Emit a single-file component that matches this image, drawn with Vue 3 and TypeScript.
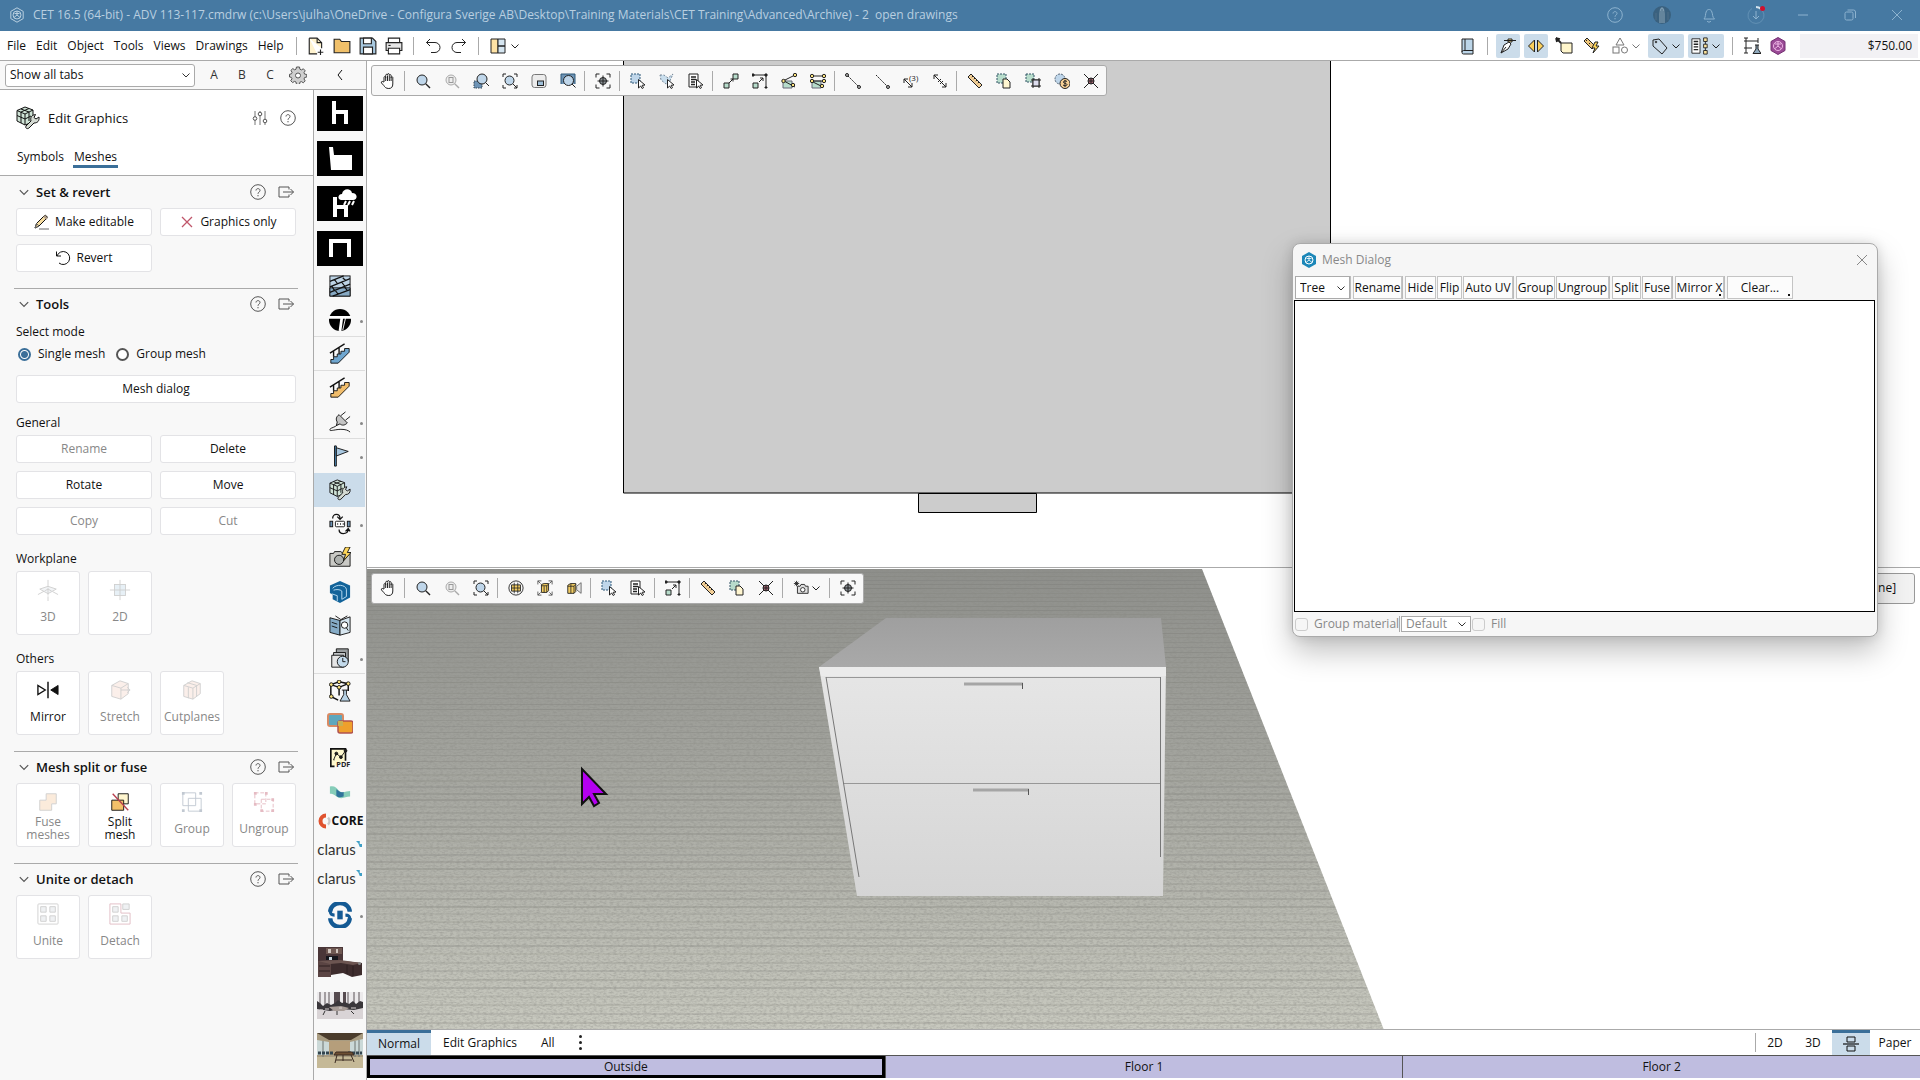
<script setup lang="ts">
import { h, ref } from 'vue'

interface IconProps { name: string; size?: number }
interface Stripe { y: number; o: number; w: number }

const magnifier = (fill: string, stroke = '#222') =>
  `<circle cx="7" cy="7" r="5" fill="${fill}" stroke="${stroke}"/><path d="M10.700 10.700 15 15" stroke="${stroke}" stroke-width="1.400"/>`
const pointer = '<path d="M8.500 6.500v8.500l2.200-2 1.500 2.500 1.300-.8-1.400-2.400 2.900-.3z" fill="#fff"/>'
const corners = '<path d="M1 4V1h3M12 1h3v3M15 12v3h-3M4 15H1v-3"/>'
const page = '<path d="M7 6h4l3 3v6H7z" fill="#fff6d0"/>'
const wrenchCube =
  '<path d="M9 1l8 3v8l-3 5-5 2-8-4V4.500z" fill="#cfe3d6"/><path d="M1 4.500 9 8l8-4M9 8v11M5 3l8 3v9M13 2.500 5 6v11M1 9.500 9 13l6-3"/><path d="M10 20l5-5c-1-4 1-6 4.500-6.500L18 11.500l2 1.500 3-2c.5 4-1.500 6-5 6l-5 5c-2 1.500-4 0-3-2z" fill="#d4dad2"/>'
const stairs = (fill: string) =>
  `<path d="M2 18h3v-3h4v-3h4V9h4V6h5v4L10 22H2z" fill="${fill}"/><path d="M1 11 17 1M5 9v6M11 5v7" stroke-width="1.500"/>`
const boxFace = '<path d="M3 7l9-5 9 3v11l-8 6-10-3z" fill="#f7d9cd"/><path d="M3 7l10 3 8-5M13 10v12" />'

const icons: Record<string, [number, string]> = {
  logo: [16, '<path d="M8 .800l6.200 3.600v7.200L8 15.200l-6.200-3.600V4.400z"/><circle cx="8" cy="8" r="4"/><path d="M8 4v4l-3 2.500M8 8l3 2.500M5.500 6.500h5"/>'],
  logoBlue: [16, '<path d="M8 0l7 4v8l-7 4-7-4V4z" fill="#1c87b8" stroke="none"/><circle cx="8" cy="8" r="4" stroke="#fff"/><path d="M8 4v4l-3 2.500M8 8l3 2.500M5.500 6.500h5" stroke="#fff" stroke-width=".8"/>'],
  help: [16, '<circle cx="8" cy="8" r="7.300"/><path d="M6 6.500C6 4 10 4 10 6.500 10 8 8 8 8 9.800M8 11v1.300"/>'],
  avatar: [20, '<circle cx="10" cy="10" r="9" fill="#3a617f" stroke="none"/><path d="M7 18V9l1-5 2-2 2 2 1 5v9z" fill="#7d9bb0" stroke="none"/><path d="M8 6v12M10 4v14M12 6v12M4 8v7M16 7v8" stroke="#4d6f88"/>'],
  bell: [16, '<path d="M3 12c2-2 1-5 2.500-8 1-2 4-2 5 0C12 7 11 10 13.500 12zM6 14c1 1.500 3 1.500 4 0"/>'],
  download: [18, '<path d="M5 2.500a8 8 0 1 0 8 0" opacity=".4"/><path d="M9 1a8 8 0 0 1 5 2" stroke="#d5e4ef" stroke-width="2"/><path d="M9 5v8M6 10l3 3 3-3"/><circle cx="15.500" cy="2.500" r="2.500" fill="#d0102e" stroke="none"/>'],
  min: [16, '<path d="M3 8h10"/>'],
  restore: [16, '<rect x="3" y="5" width="8" height="8" rx="1.500"/><path d="M5.500 3h6a2 2 0 0 1 2 2v6"/>'],
  close: [16, '<path d="M3 3l10 10M13 3 3 13"/>'],
  chev: [10, '<path d="M1.500 3.500 5 7l3.500-3.500"/>'],
  chevLeft: [16, '<path d="M10 3 6 8l4 5"/>'],
  newFile: [16, '<path d="M2 1h7l4 4v5M9 15H2V1" fill="#fff3cf"/><path d="M9 1v4h4M12 11v5M9.500 13.500h5"/>'],
  open: [16, '<path d="M1 2h5l1.500 2H15v10H1z" fill="#f0c06a"/>'],
  save: [16, '<path d="M1 1h11l3 3v11H1z" fill="#a8c9e0"/><path d="M4 1h7v5H4z" fill="#fff"/><path d="M4 9h8v6H4z" fill="#fff"/>'],
  print: [16, '<path d="M3 5V1h10v4" fill="#fff"/><path d="M1 5h14v7H1z" fill="#e6e6e6"/><path d="M3 10h10v5H3z" fill="#fff"/><path d="M3 7.500h2"/>'],
  undo: [16, '<path d="M5 1 1.500 4.500 5 8M1.500 4.500H10a5 5 0 0 1 0 10H6"/>'],
  redo: [16, '<path d="M11 1l3.500 3.500L11 8M14.500 4.500H6a5 5 0 0 0 0 10h4"/>'],
  layout: [16, '<path d="M1 1h7v14H1z" fill="#ffe3a5"/><path d="M8 1h7v7H8zM8 8h7v7H8z" fill="#d5e5f0"/>'],
  gear: [18, '<path d="M7.500 1h3l.4 2.200 1.500.7 2-1.100 1.800 2-1.200 1.800.6 1.500 2.200.4v2.500l-2.200.5-.6 1.500 1.200 1.900-1.900 1.900-1.900-1.200-1.500.6-.4 2.200h-3L7 16l-1.500-.6-1.900 1.200-1.900-1.900L3 12.800l-.7-1.500L.5 11V8.300l2-.5.600-1.500-1.200-1.900 1.900-1.800 1.800 1.200L7 3.200z" fill="#cfcfcf" stroke="#555"/><circle cx="9" cy="9.500" r="2.500" fill="#fff" stroke="#555"/>'],
  bookBlue: [18, '<path d="M3 2h11v15H4.500A1.500 1.500 0 0 1 3 15.500z" fill="#bcd5e8"/><path d="M3 15c0-1 .5-1.500 1.500-1.500H14M6 2v11"/>'],
  snap: [18, '<path d="M5 3.500h12M9 2h4v3H9z" fill="#ffe08a"/><path d="M2 16l3-8 5-3 2 2-3 5-7 4zM2 16l5-6" fill="#fff"/>'],
  flipH: [18, '<path d="M7.500 3v12L1.500 9zM10.500 3v12l6-6z" fill="#fbd05c"/>'],
  note: [18, '<path d="M6 6h11v10H8l-2-2z" fill="#fff6cc"/><path d="M1 1l5 5M1 1l1 4M1 1l4 1" stroke-width="1.800"/>'],
  measureBolt: [18, '<path d="M1 4l3-3 8 8-3 3z" fill="#efc77b"/><path d="M12 5l-3 6h3l-2 5 6-7h-3l2-4z" fill="#ffd65a"/><path d="M3 4l1-1M6 7l1-1"/>'],
  shapes: [18, '<path d="M9 1l4 7H5z"/><rect x="2" y="10" width="6" height="6"/><circle cx="13.500" cy="13" r="3"/>'],
  tag: [18, '<path d="M2 3l6-1 8 9-5 6-9-8z"/><circle cx="5" cy="5" r=".8"/>'],
  list: [20, '<path d="M1 2h9v16H1z" fill="#fff"/><path d="M3 5h5M3 8h5M3 11h5M3 14h5" stroke-width="1.500"/><path d="M14 1h4v4h-4zM14 8h4v4h-4zM14 15h4v4h-4z" fill="#fbe29b"/><path d="M16 5v3M16 12v3"/>'],
  flaskFilm: [18, '<path d="M3 1v15M1 4h14M1 11h8M15 1v5M1 16h4M1 1h4"/><path d="M12 8h4M13 8v4l-3 4.500h8L15 12V8" fill="#8fa9bd"/>'],
  hexPurple: [18, '<path d="M9 .500l7 4v9l-7 4-7-4v-9z" fill="#9a4a96" stroke="#743072"/><circle cx="9" cy="9" r="4.500" stroke="#efb6e6"/><path d="M9 5v4l-3 2.500M9 9l3 2.500M6 7h6" stroke="#efb6e6"/>'],
  hand: [16, '<path d="M4 9V4.500c0-1.300 1.700-1.300 1.700 0V2.300c0-1.300 1.800-1.300 1.800 0V1.500c0-1.200 1.800-1.200 1.800 0v1c0-1.200 1.800-1.200 1.800 0v2c0-1 1.700-1 1.700 0V11c0 3-1.500 4.500-4 4.500-3 0-4-1.500-5-3L1.500 10c-.6-1.400.8-2 1.500-1.200zM5.700 4v4M7.500 3v5M9.300 3v5M11.100 4v4" fill="#fff"/>'],
  zoom: [16, magnifier('#bfd6ea')],
  zoomPage: [16, magnifier('#eee', '#aaa') + '<rect x="5" y="4.500" width="4" height="5" stroke="#999"/>'],
  zoomArea: [16, '<rect x="1" y="8" width="8" height="7" fill="#6d93b5" stroke="#345" stroke-dasharray="1.500 1"/><circle cx="9" cy="6" r="5" fill="#bfd6ea"/><path d="M12.500 9.500 16 13"/>'],
  zoomFit: [16, corners + '<circle cx="7.500" cy="7.500" r="4.500" fill="#bfd6ea"/><path d="M11 11l4 4"/>'],
  minimap: [16, '<rect x="1" y="1.500" width="14" height="13" rx="2.500" fill="#ececec" stroke="#777"/><rect x="6.500" y="8" width="6" height="4.500" fill="#9fbfd8"/>'],
  zoomWin: [16, '<path d="M1 11V1h14v10" stroke="#2f5878" fill="#6d93b5"/><circle cx="8.500" cy="7.500" r="5" fill="#bfd6ea"/><path d="M12 11l3.500 3.500"/>'],
  target: [16, '<path d="M1 4.500V1h3.500M11.500 1H15v3.500M15 11.500V15h-3.500M4.500 15H1v-3.500"/><circle cx="8" cy="8" r="3.500" fill="#8b9297"/><path d="M8 2.500v11M2.500 8h11"/>'],
  selRect: [16, '<rect x="1" y="1" width="9" height="9" fill="#bfd6ea" stroke="#2f5878" stroke-dasharray="2 1"/>' + pointer],
  selPoly: [16, '<path d="M1 2h4l4 3 5-4-4 9-3 1-5-4z" fill="#c9deed" stroke="#789" stroke-dasharray="2 1.500"/>' + pointer],
  selList: [16, '<path d="M1 1h9v13H1z" fill="#fff"/><path d="M3 4h5M3 6.500h5M3 9h4M3 11.500h4" stroke-width="1.400"/>' + pointer],
  linkBox: [16, '<path d="M1 10h5v5H1zM10 1h5v5h-5z" fill="#b7dccb"/><path d="M6 10l4-4M7.500 6H10v2.500"/>'],
  stretchBox: [16, '<path d="M1 10h5v5H1z" fill="#b7dccb"/><path d="M1 2h13v13M7 9l4-4M8 5h3v3"/><path d="M0 1h2v2H0zM13 1h2v2h-2zM13 14h2v1h-2z" fill="#222"/>'],
  poly: [16, '<path d="M2 8h9v7H2z" fill="#b7dccb" stroke="#667"/><path d="M2 8l12-6M3 8l11 6"/><circle cx="2.500" cy="8" r="1.700" fill="#fbe27c"/><circle cx="14" cy="2" r="1.700" fill="#fbe27c"/><circle cx="12" cy="12" r="1.700" fill="#fbe27c"/>'],
  polyPair: [16, '<path d="M2 8h9v7H2z" fill="#b7dccb" stroke="#667"/><path d="M2 3h12M2 8h12M3 9l10 5"/><circle cx="2" cy="3" r="1.700" fill="#fbe27c"/><circle cx="14" cy="3" r="1.700" fill="#fbe27c"/><circle cx="2" cy="8" r="1.700" fill="#fbe27c"/><circle cx="14" cy="8" r="1.700" fill="#fbe27c"/><circle cx="12" cy="13" r="1.700" fill="#fbe27c"/>'],
  dots: [16, '<path d="M3 3l10 10" stroke-dasharray="2 1"/><circle cx="2" cy="2" r="1.500" fill="#bbb"/><circle cx="14" cy="14" r="1.500" fill="#bbb"/>'],
  dots2: [16, '<path d="M2 2l11 11" stroke-dasharray="2 1"/><circle cx="14" cy="14" r="1.500" fill="#bbb"/>'],
  dim3: [16, '<path d="M1 6l8 8M1 10V6h4M9 10v4H5"/><text x="6" y="8" font-size="8" fill="#222" stroke="none" font-family="Open Sans, sans-serif">(3)</text>'],
  dim: [16, '<path d="M2 2l12 12M2 6V2h4M14 10v4h-4M6 9l3-3M8 11l3-3"/>'],
  ruler: [16, '<path d="M1 4l3-3 11 11-3 3z" fill="#f3cf96"/><path d="M6 3 4.800 4.200M8 5 6.800 6.200M10 7 8.800 8.200M12 9l-1.200 1.200"/>'],
  copySel: [16, '<rect x="1" y="1" width="9" height="9" fill="#b7dccb" stroke="#356" stroke-dasharray="2 1"/>' + page],
  filmSel: [16, '<rect x="1" y="1" width="8" height="8" fill="#b7dccb" stroke="#356" stroke-dasharray="2 1"/><path d="M8 5v10M14 5v10M6 7h10M6 13h10"/><rect x="8" y="7" width="6" height="6" fill="#dde"/>'],
  price: [16, '<circle cx="6" cy="6" r="5" fill="#bfd6ea" stroke="#567" stroke-dasharray="2 1"/><circle cx="11" cy="10.500" r="5" fill="#f6cf95"/><path d="M13 8.500c-1-1-4-.8-3.500 1 .5 1 3 .7 3.500 2 0 1.500-3 1.500-4 .5M11 7v7"/>'],
  cross: [16, '<path d="M1 1l14 14M15 1 1 15"/><circle cx="8" cy="8" r="3" fill="#a46472"/><path d="M5 8h6M8 5v6"/>'],
  orbit: [18, '<circle cx="9" cy="9" r="8"/><path d="M4 5.500h10v7H4z" fill="#f3cd62"/><path d="M4 9h10M7 3v12M11 3v12" stroke-width=".9"/>'],
  boxFit: [18, '<path d="M5 5l3-1h5v8l-2 2H5z" fill="#f3cd62"/><path d="M5 6.500h6l2-2M11 6v8M8 7v7" stroke-width=".9"/><path d="M1 5V1h4M1 1l3 3M13 1h4v4M17 1l-3 3M17 13v4h-4M17 17l-3-3M5 17H1v-4M1 17l3-3" stroke="#555"/>'],
  boxCam: [18, '<path d="M2 6l3-2h6v9l-2 2H2z" fill="#f3cd62"/><path d="M2 7h7l2-2M9 7v8M5.500 4v11" stroke-width=".9"/><path d="M12 7l5-4v12l-5-4z" fill="#e4e4e4" stroke="#666"/>'],
  camera: [18, '<path d="M5 7h3l1-2h4l1 2h3v8H5z" fill="#ddd"/><circle cx="11" cy="11" r="2.500" fill="#fff"/><path d="M4 1v6M1 4h6M2 2l4 4M6 2 2 6"/>'],
  splitView: [16, '<path d="M4 1h8v5H4zM4 10h8v5H4z"/><path d="M0 8h16" stroke-width="1.200"/>'],
  sliders: [16, '<path d="M3 1v14M8 1v14M13 1v14" stroke="#777"/><circle cx="3" cy="8.500" r="1.800" fill="#fff"/><circle cx="8" cy="4" r="1.800" fill="#fff"/><circle cx="13" cy="11" r="1.800" fill="#fff"/>'],
  exportIcon: [16, '<path d="M11 5.500V3H1v10h10v-2.500M5 8h10.500M12.500 5l3 3-3 3"/>'],
  pencil: [16, '<path d="M1 14l1.500-4.500 8-8c1-1 3.500 1.500 2.500 2.500l-8 8z" fill="#f6dca0"/><path d="M10 2l3 3" stroke="#a98" stroke-width="2"/><path d="M1 14l1.500-4.500L5 12zM5 15h10" stroke="#666"/>'],
  redX: [16, '<path d="M3 3l10 10M13 3 3 13" stroke="#c0566a" stroke-width="1.300"/>'],
  revert: [16, '<path d="M1.500 1.500V6H6M2 6a6.500 6.500 0 1 1 2 7"/>'],
  wrenchCube: [24, wrenchCube],
  wp3d: [24, '<path d="M12 8l9 3-9 5-9-5z" fill="#dfe5ea"/><path d="M12 1v23M1 17l11-6 11 6" stroke-dasharray="8 1"/>'],
  wp2d: [24, '<rect x="6" y="6" width="12" height="12" fill="#c5dcea"/><path d="M12 1v22M1 12h22"/>'],
  mirror: [24, '<path d="M1 7v10l8-5z" stroke-width="1.500"/><path d="M23 7v10l-8-5z" fill="#111"/><path d="M12 3v18" stroke-width="1.600"/>'],
  stretch: [24, boxFace + '<path d="M13 12h10M20 9l3 3-3 3"/>'],
  cutplanes: [24, boxFace + '<path d="M7 4l10 3v12M8 9v12"/>'],
  fuse: [24, '<path d="M10 3h11v11h-5v7H3V10h7z" fill="#f7cfa8"/>'],
  split: [24, '<path d="M10 3h11v11H10z" fill="#fff6cf"/><path d="M3 10h13v11H3z" fill="#f3c069"/><path d="M4 3l17 18" stroke="#b8404f" stroke-width="1.500"/>'],
  group: [24, '<path d="M2 2h14v14H2zM8 8h14v14H8z" stroke="#66788f"/><path d="M1 1h3v3H1zM20 1h3v3h-3zM1 20h3v3H1zM20 20h3v3h-3z" fill="#66788f" stroke="none"/>'],
  ungroup: [24, '<path d="M2 2h12v12H2z" stroke-dasharray="4 2" stroke="#c0566a"/><path d="M9 9h13v13H9z" stroke-dasharray="4 2" stroke="#c0566a"/><path d="M1 1h3v3H1zM13 1h3v3h-3zM1 13h3v3H1zM20 8h3v3h-3zM8 20h3v3H8zM20 20h3v3h-3z" fill="#c0566a" stroke="none"/>'],
  unite: [24, '<rect x="1" y="1" width="22" height="22" rx="1"/><path d="M4 4h6v6H4zM14 4h6v6h-6zM4 14h6v6H4zM14 14h6v6h-6z" fill="#d8dde2"/>'],
  detach: [24, '<path d="M1 1h12v10h10v12H1z" stroke="#b4566a"/><path d="M4 4h6v6H4zM15 1h7v6h-7zM4 14h6v6H4zM14 14h6v6h-6z" fill="#d8dde2"/>'],
  wall: [24, '<rect x="1" y="1" width="22" height="22" fill="#bcd3e5"/><path d="M1 14h22v9H1z" fill="#86a9c4"/><path d="M1 7 16 1M1 13 23 4M1 19 23 10M4 23l19-7M6 5l3 4M14 8l3 4M7 17l3 4M15 3l3 3M17 13l3 4M3 12l3 5" stroke-width="1.300"/>'],
  tee: [24, '<circle cx="12" cy="12" r="12" fill="#000" stroke="none"/><path d="M0 9h24M17 9h-3l-2 15" stroke="#fff" stroke-width="3"/><path d="M15 23l3-13" stroke="#fff"/>'],
  stairsBlue: [24, stairs('#6fa6cf')],
  stairsOrange: [24, stairs('#f1bd6b')],
  plug: [24, '<path d="M11 4l9 9c-3 3-6 3-8 1l-4 2 1-4c-2-3-1-6 2-8z" fill="#c4c4c4"/><path d="M13 5l5-4M18 10l5-4M9 15c-2 3-7 3-8 5-1 3 5 0 12 0 5 0 8 1 10 3"/>'],
  flag: [24, '<path d="M6 1h2v22H6z" fill="#4d8ab8"/><path d="M8 3l13 4-13 5z" fill="#a9c8e0"/>'],
  swap: [24, '<rect x="1" y="9" width="3" height="6" fill="#6d93b5"/><rect x="20" y="9" width="3" height="6" fill="#6d93b5"/><rect x="7" y="9" width="10" height="6" rx="1" fill="#fff"/><path d="M9 12h1M12 12h1M15 12h1M4 6c0-6 8-6 8 0M9 4l3 3 3-3M11 18c0 6 9 6 10 0M18 20l3-3 2 3" stroke-width="1.400"/>'],
  cameraBolt: [24, '<path d="M1 7h4l1-2h7l2 2h8v14H1z" fill="#c9c9c5"/><circle cx="11" cy="14" r="5" fill="#aeb1ae"/><path d="M18 0l-4 8h4l-2 7 8-9h-4l3-6z" fill="#ffd65a"/>'],
  logo3d: [24, '<path d="M12 0l11 5v13l-11 6-8-4v-5l-3-2V5z" fill="#12639a" stroke="none"/><path d="M4 8c4-5 14-4 15 1v8l-5 3v-9c-2-2-6-2-9-1M3 14l6 2v6" stroke="#bfe0f5"/>'],
  catalog: [24, '<path d="M1 3l11 3v16L1 19z" fill="#85abc6"/><path d="M12 6l11-4v17l-11 3z" fill="#d6e5ef"/><path d="M3 8l6 2M3 12l6 2M7 1l6 4 7-4"/><circle cx="17" cy="11" r="3.500" fill="#fff"/><path d="M19 14l2 3"/>'],
  docsClock: [24, '<path d="M8 2h13v14H8z" fill="#9b9fa1"/><path d="M5 6h13v12H5z" fill="#c3c6c8"/><path d="M3 9h13v13H3z" fill="#e6e6e6"/><circle cx="15" cy="16" r="6" fill="#c3daeb"/><path d="M15 12v4h3"/>'],
  cubeFlask: [24, '<path d="M2 5l9-3 10 2v8M2 5v13l8 4M2 5l9 3 10-4M11 8v9" stroke-width="1.600"/><circle cx="2.500" cy="5" r="2" fill="#fbe27c"/><circle cx="11" cy="2" r="2" fill="#fbe27c"/><circle cx="21" cy="4" r="2" fill="#fbe27c"/><circle cx="11" cy="8" r="2" fill="#fbe27c"/><circle cx="2.500" cy="18" r="2" fill="#fbe27c"/><path d="M14 11h7M16 11v5l-4 7h11l-4-7v-5" fill="#b9d3e6"/>'],
  tiles: [26, '<rect x="1" y="2" width="15" height="12" rx="2" fill="#5fa7bd" stroke="#d98a63" stroke-width="2"/><rect x="11" y="9" width="15" height="12" rx="2" fill="#efa02c" stroke="#b0524f" stroke-width="1.500"/><path d="M11 9h5v5h-5z" fill="#c7b054" stroke="none"/>'],
  pdf: [24, '<path d="M6 20H2V1h16v13" fill="#fff9cf" stroke-width="1.800"/><path d="M5 13l3-7 5 4 5-7M5 13h1"/><circle cx="8" cy="6" r="1.500" fill="#222"/><circle cx="13" cy="10" r="1.500" fill="#222"/><circle cx="18" cy="3" r="1.500" fill="#222"/><text x="8" y="21" font-size="8" font-weight="700" fill="#222" stroke="none" font-family="Open Sans, sans-serif">PDF</text>'],
  wave: [24, '<path d="M1 6c5-1 7 1 10 5 4 3 8 0 12 0v6c-5 0-8 3-13 1-4-2-5-5-9-4z" fill="#86cdb9" stroke="none"/><path d="M8 9c3 2 4 4 8 3v5c-4 1-6 1-8-1z" fill="#30739b" stroke="none"/>'],
  esse: [24, '<path d="M3 9a9 8 0 0 1 18 0M21 15a9 8 0 0 1-18 0" stroke="#145a94" stroke-width="4"/><path d="M3 8c0 3 1 4 4 4M21 16c0-3-1-4-4-4" stroke="#145a94" stroke-width="3"/><path d="M12 8v8" stroke="#145a94" stroke-width="5"/>'],
  coreRing: [16, '<path d="M10 2.500a5.500 5.500 0 1 0 0 11" stroke="#e0532f" stroke-width="4"/><path d="M12 4.500a5 5 0 0 1 0 7" stroke="#c9c9c9" stroke-width="2.500"/>'],
  spark: [8, '<path d="M0 0h5v4h3v4H5L3 3z" fill="#3f9fc6" stroke="none"/>'],
}

const Ic = (p: IconProps) => {
  const [box, body] = icons[p.name]
  return h('svg', {
    viewBox: `0 0 ${box} ${box}`, width: p.size ?? box, height: p.size ?? box,
    fill: 'none', stroke: 'currentColor', 'aria-hidden': 'true', innerHTML: body,
  })
}
Ic.props = ['name', 'size']

const menus = ['File', 'Edit', 'Object', 'Tools', 'Views', 'Drawings', 'Help']
const windowIcons = ['help', 'avatar', 'bell', 'download', 'min', 'restore', 'close']
const topTools = ['hand', '|', 'zoom', 'zoomPage', 'zoomArea', 'zoomFit', 'minimap', 'zoomWin', '|', 'target', '|',
  'selRect', 'selPoly', 'selList', '|', 'linkBox', 'stretchBox', 'poly', 'polyPair', '|', 'dots', 'dots2', 'dim3', 'dim', '|',
  'ruler', 'copySel', 'filmSel', 'price', 'cross']
const bottomTools = ['hand', '|', 'zoom', 'zoomPage', 'zoomFit', '|', 'orbit', 'boxFit', 'boxCam', '|', 'selRect', 'selList', '|',
  'stretchBox', '|', 'ruler', 'copySel', 'cross', '|', 'camera', '|', 'target']
const stripTools = [
  { icon: 'wall' }, { icon: 'tee', more: true, line: true }, { icon: 'stairsBlue', line: true }, { icon: 'stairsOrange' },
  { icon: 'plug', more: true, line: true }, { icon: 'flag', more: true }, { icon: 'wrenchCube', on: true },
  { icon: 'swap', more: true }, { icon: 'cameraBolt' }, { icon: 'logo3d' }, { icon: 'catalog' },
  { icon: 'docsClock', more: true, line: true, low: true }, { icon: 'cubeFlask' }, { icon: 'tiles' }, { icon: 'pdf' }, { icon: 'wave', low: true },
]
const general = [
  { label: 'Rename', off: true }, { label: 'Delete', off: false }, { label: 'Rotate', off: false },
  { label: 'Move', off: false }, { label: 'Copy', off: true }, { label: 'Cut', off: true },
]
const workplane = [{ label: '3D', icon: 'wp3d', off: true }, { label: '2D', icon: 'wp2d', off: true }]
const others = [{ label: 'Mirror', icon: 'mirror', off: false }, { label: 'Stretch', icon: 'stretch', off: true }, { label: 'Cutplanes', icon: 'cutplanes', off: true }]
const splitFuse = [
  { label: 'Fuse meshes', icon: 'fuse', off: true }, { label: 'Split mesh', icon: 'split', off: false },
  { label: 'Group', icon: 'group', off: true }, { label: 'Ungroup', icon: 'ungroup', off: true },
]
const uniteDetach = [{ label: 'Unite', icon: 'unite', off: true }, { label: 'Detach', icon: 'detach', off: true }]
const dialogGroups = [
  [{ label: 'Rename', w: 49 }],
  [{ label: 'Hide', w: 31 }, { label: 'Flip', w: 25 }, { label: 'Auto UV', w: 50 }],
  [{ label: 'Group', w: 39 }, { label: 'Ungroup', w: 53 }],
  [{ label: 'Split', w: 29 }, { label: 'Fuse', w: 30 }],
  [{ label: 'Mirror X', w: 49, drop: true }],
  [{ label: 'Clear...', w: 66, drop: true }],
]
const mode = ref('single')

// Carpet ribs get wider apart towards the camera.
const stripes: Stripe[] = []
for (let y = 3, i = 0; y < 470; i++) {
  stripes.push({ y: Math.round(y), o: 0.08 + (i % 5) * 0.02, w: y < 200 ? 1 : 2 })
  y += 4 + y / 90
}
</script>

<template>
  <div class="app">
    <header class="titlebar">
      <Ic name="logo" />
      <h1>CET 16.5 (64-bit) - ADV 113-117.cmdrw (c:\Users\julha\OneDrive - Configura Sverige AB\Desktop\Training Materials\CET Training\Advanced\Archive) - 2&nbsp; open drawings</h1>
      <div class="win">
        <button v-for="w in windowIcons" :key="w" :aria-label="w"><Ic :name="w" /></button>
      </div>
    </header>

    <nav class="menubar">
      <button v-for="m in menus" :key="m" class="menu">{{ m }}</button>
      <i class="sep first"></i>
      <button v-for="n in ['newFile', 'open', 'save', 'print']" :key="n" class="mi" :aria-label="n"><Ic :name="n" size="18" /></button>
      <i class="sep"></i>
      <button v-for="n in ['undo', 'redo']" :key="n" class="mi" :aria-label="n"><Ic :name="n" /></button>
      <i class="sep"></i>
      <button class="mi wide" aria-label="layout"><Ic name="layout" /><Ic name="chev" /></button>
      <div class="right">
        <button class="mi" aria-label="library"><Ic name="bookBlue" /></button>
        <i class="sep"></i>
        <button class="mb on" aria-label="snap"><Ic name="snap" /></button>
        <button class="mb on" aria-label="flip"><Ic name="flipH" /></button>
        <button class="mb" aria-label="note"><Ic name="note" /></button>
        <button class="mb" aria-label="measure"><Ic name="measureBolt" /></button>
        <button class="mb dd grey" aria-label="shapes"><Ic name="shapes" /><Ic name="chev" /></button>
        <button class="mb dd on" aria-label="tag"><Ic name="tag" /><Ic name="chev" /></button>
        <button class="mb dd on" aria-label="list"><Ic name="list" size="18" /><Ic name="chev" /></button>
        <i class="sep"></i>
        <button class="mi" aria-label="lab"><Ic name="flaskFilm" /></button>
        <button class="mi" aria-label="extensions"><Ic name="hexPurple" /></button>
        <output class="total">$750.00</output>
      </div>
    </nav>

    <div class="work">
      <div class="left">
        <div class="tabbar">
          <label class="sel tabs-sel"><select aria-label="Tabs"><option>Show all tabs</option></select><Ic name="chev" /></label>
          <button v-for="l in ['A', 'B', 'C']" :key="l" class="letter">{{ l }}</button>
          <button class="gear" aria-label="Settings"><Ic name="gear" /></button>
          <button class="collapse" aria-label="Collapse"><Ic name="chevLeft" /></button>
        </div>
        <div class="cols">
          <aside class="panel">
            <div class="head">
              <div class="title"><Ic name="wrenchCube" /><h2>Edit Graphics</h2><button aria-label="Options"><Ic name="sliders" /></button><button aria-label="Help"><Ic name="help" /></button></div>
              <div class="tabs"><a href="#">Symbols</a><a href="#" class="cur">Meshes</a></div>
            </div>

            <section>
              <div class="sh"><Ic name="chev" size="12" /><h3>Set &amp; revert</h3><button aria-label="Help"><Ic name="help" /></button><button aria-label="Detach panel"><Ic name="exportIcon" /></button></div>
              <div class="g2">
                <button class="btn"><Ic name="pencil" />Make editable</button>
                <button class="btn"><Ic name="redX" />Graphics only</button>
                <button class="btn"><Ic name="revert" />Revert</button>
              </div>
            </section>
            <section>
              <div class="sh"><Ic name="chev" size="12" /><h3>Tools</h3><button aria-label="Help"><Ic name="help" /></button><button aria-label="Detach panel"><Ic name="exportIcon" /></button></div>
              <h4 class="tight">Select mode</h4>
              <div class="radios">
                <label><input v-model="mode" type="radio" name="mode" value="single" />Single mesh</label>
                <label><input v-model="mode" type="radio" name="mode" value="group" />Group mesh</label>
              </div>
              <button class="btn full">Mesh dialog</button>
              <h4>General</h4>
              <div class="g2"><button v-for="b in general" :key="b.label" class="btn" :disabled="b.off">{{ b.label }}</button></div>
              <h4 class="far">Workplane</h4>
              <div class="g4"><button v-for="b in workplane" :key="b.label" class="tile" :disabled="b.off"><Ic :name="b.icon" size="22" /><span>{{ b.label }}</span></button></div>
              <h4 class="far">Others</h4>
              <div class="g4"><button v-for="b in others" :key="b.label" class="tile" :disabled="b.off"><Ic :name="b.icon" size="22" /><span>{{ b.label }}</span></button></div>
            </section>
            <section>
              <div class="sh"><Ic name="chev" size="12" /><h3>Mesh split or fuse</h3><button aria-label="Help"><Ic name="help" /></button><button aria-label="Detach panel"><Ic name="exportIcon" /></button></div>
              <div class="g4"><button v-for="b in splitFuse" :key="b.label" class="tile" :disabled="b.off"><Ic :name="b.icon" size="22" /><span>{{ b.label }}</span></button></div>
            </section>
            <section>
              <div class="sh"><Ic name="chev" size="12" /><h3>Unite or detach</h3><button aria-label="Help"><Ic name="help" /></button><button aria-label="Detach panel"><Ic name="exportIcon" /></button></div>
              <div class="g4"><button v-for="b in uniteDetach" :key="b.label" class="tile" :disabled="b.off"><Ic :name="b.icon" size="22" /><span>{{ b.label }}</span></button></div>
            </section>
          </aside>

          <div class="strip">
            <button class="blk" aria-label="Seating"><svg viewBox="0 0 46 35"><path d="M17 5v23M17 16h12v12" class="w" /></svg></button>
            <button class="blk" aria-label="Lounge"><svg viewBox="0 0 46 35"><path d="M12 6h4l1 8h18v15H14z" fill="#fff" /></svg></button>
            <button class="blk" aria-label="Outdoor"><svg viewBox="0 0 46 35"><path d="M18 11v20M18 21h11v10" class="w" /><path d="M24 14c-4-1-3-6 1-6 1-6 9-6 10-1 6 0 6 7 1 7z" fill="#fff" /><path d="M29 15l-2 4M33 15l-2 4M37 15l-2 4" stroke="#fff" stroke-width="2" /></svg></button>
            <button class="blk" aria-label="Tables"><svg viewBox="0 0 46 35"><path d="M14 26V10h18v16" class="w" /></svg></button>
            <button v-for="s in stripTools" :key="s.icon" class="st" :class="{ on: s.on, line: s.line, low: s.low }" :aria-label="s.icon">
              <Ic :name="s.icon" :size="s.icon === 'tiles' ? 26 : 22" /><i v-if="s.more" class="dot"></i>
            </button>
            <button class="core"><Ic name="coreRing" />CORE</button>
            <button class="clarus">clarus<Ic name="spark" size="6" /></button>
            <button class="clarus">clarus<Ic name="spark" size="6" /></button>
            <button class="st esse" aria-label="S"><Ic name="esse" size="26" /><i class="dot"></i></button>
            <button class="pic desk" aria-label="Desks">
              <svg viewBox="0 0 46 32"><path d="M1 1h25v14H1z" fill="#4a3638" /><path d="M9 2h16v6H9z" fill="#6f5852" /><path d="M9 10h12v4H9z" fill="#15151b" /><path d="M11 3h3v4h-3zM19 3h2v4h-2z" fill="#cfc4bd" /><path d="M12 11h3v3h-3z" fill="#c9d6dd" /><path d="M1 15h13v16H1z" fill="#5a4443" /><path d="M14 17l12-2 19 2v12l-10 2-9-4-12 2z" fill="#3d2c2d" /><path d="M1 15l22-1 22 3-9 2-12-2-11 1z" fill="#6c5551" /><path d="M2 20h11M2 25h11M30 19v9M36 20v10" stroke="#2c1e20" /></svg><i class="dot"></i>
            </button>
            <button class="pic room" aria-label="Meeting room">
              <svg viewBox="0 0 46 27"><path d="M0 0h46v27H0z" fill="#d9d4d6" /><path d="M0 0h46v14H0z" fill="#eceaec" /><path d="M3 0v13M8 0v13M12 0v14M31 0v13M37 0v13M42 0v13" stroke="#5a5257" /><path d="M17 0h6v13h-6zM26 0h3v12h-3z" fill="#564b50" /><path d="M0 9l3 2 3 3 4-3 4 2 4-2 3-3 4 3 3-1 4 2 4-3 3 3 4-3 3 1v6l-9 2-14-1-10 2-13-2z" fill="#3a373b" /><path d="M12 15l12-1 8 2-5 3H17z" fill="#a89d98" /><path d="M8 17h4M22 16h3M34 16h5M3 18h3" stroke="#d8d2d2" /><path d="M8 19l-2 4M20 19v4M34 19l3 3" stroke="#333" /></svg>
            </button>
            <button class="pic hall" aria-label="Office">
              <svg viewBox="0 0 46 35"><path d="M0 0h46v35H0z" fill="#a99c81" /><path d="M0 0h46L34 7H12z" fill="#4b3c2c" /><path d="M0 7l12 2v13H0zM46 6L33 9v13h13z" fill="#cbd9d8" /><path d="M12 8h21v13H12z" fill="#b59e7b" /><path d="M6 8v16M38 8v16M42 7v17" stroke="#6e7470" /><path d="M1 20h15M31 20h14" stroke="#33454e" stroke-width="3" stroke-dasharray="3 1" /><path d="M0 24h46v11H0z" fill="#c5b997" /><path d="M19 19h16l2 3H17zM20 22l-2 8M34 22l3 7M26 22v6M19 27h16" fill="#6c4e32" stroke="#3c2c22" /></svg>
            </button>
          </div>
        </div>
      </div>

      <main class="stage">
        <div class="view plan">
          <svg viewBox="0 0 1553 507" preserveAspectRatio="xMinYMin slice" class="scene">
            <path d="M256.500-1v433h707V-1z" fill="#ccc" stroke="#000" /><path d="M551.500 432.500v19h118v-19z" fill="#ccc" stroke="#000" />
          </svg>
          <div class="tools"><template v-for="(t, i) in topTools" :key="i"><i v-if="t === '|'"></i><button v-else :aria-label="t"><Ic :name="t" size="16" /></button></template></div>
        </div>
        <div class="view render">
          <svg viewBox="0 0 1553 461" preserveAspectRatio="xMinYMin slice" class="scene">
            <defs>
              <linearGradient id="floor" x1="0" y1="0" x2="0" y2="1"><stop offset="0" stop-color="#8e8f8b" /><stop offset=".4" stop-color="#a2a39d" /><stop offset="1" stop-color="#c8c9bf" /></linearGradient>
              <linearGradient id="front" x1="0" y1="0" x2="0" y2="1"><stop offset="0" stop-color="#e6e6e6" /><stop offset="1" stop-color="#d5d5d5" /></linearGradient>
              <linearGradient id="lid" x1="0" y1="0" x2="0" y2="1"><stop offset="0" stop-color="#9f9f9f" /><stop offset="1" stop-color="#a9a9a9" /></linearGradient>
              <filter id="grain" x="0" y="0" width="100%" height="100%"><feTurbulence type="fractalNoise" baseFrequency=".3 .6" numOctaves="2" seed="4" /><feColorMatrix values="0 0 0 0 .25  0 0 0 0 .25  0 0 0 0 .23  .9 0 0 0 -.34" /></filter>
              <clipPath id="area"><path d="M0 0h835l182 461H0z" /></clipPath>
            </defs>
            <g clip-path="url(#area)">
              <rect width="1020" height="461" fill="url(#floor)" />
              <rect v-for="s in stripes" :key="s.y" :y="s.y" width="1020" :height="s.w" fill="#55564f" :opacity="s.o" />
              <rect width="1020" height="461" filter="url(#grain)" />
            </g>
            <path d="M519 49h275l5 49H452z" fill="url(#lid)" />
            <path d="M452 98h347l-3 229H490z" fill="url(#front)" />
            <path d="M452 98h347v9H454z" fill="#ebebeb" />
            <path d="M459 108.500h334M476 214.500h317" stroke="#979797" fill="none" />
            <path d="M459 108l33 200M793.500 108v180" stroke="#777" fill="none" />
            <path d="M597 115h59M606 221h56" stroke="#a5a5a5" stroke-width="3" /><path d="M655.500 114v6M661.500 220v6" stroke="#555" />
            <path d="M215 200v35l7-7 5 9 5-3-5-9h12z" fill="#b400f0" stroke="#111" stroke-width="2" />
          </svg>
          <div class="tools"><template v-for="(t, i) in bottomTools" :key="i"><i v-if="t === '|'"></i><button v-else :class="{ dd: t === 'camera' }" :aria-label="t"><Ic :name="t" size="16" /><Ic v-if="t === 'camera'" name="chev" /></button></template></div>
          <button class="none">[None]</button>
        </div>

        <div class="modes">
          <button class="on first">Normal</button><button>Edit Graphics</button><button>All</button>
          <button class="kebab" aria-label="More"><i></i><i></i><i></i></button>
          <div class="dims"><button>2D</button><button>3D</button><button class="on" aria-label="Split"><Ic name="splitView" /></button><button>Paper</button></div>
        </div>
        <div class="floors"><button class="cur">Outside</button><button>Floor 1</button><button>Floor 2</button></div>

        <div class="dialog" role="dialog" aria-label="Mesh Dialog">
          <div class="dt"><Ic name="logoBlue" /><h2>Mesh Dialog</h2><button aria-label="Close"><Ic name="close" /></button></div>
          <div class="dbar">
            <label class="sel tree"><select aria-label="View"><option>Tree</option></select><Ic name="chev" /></label>
            <div v-for="(g, i) in dialogGroups" :key="i" class="dg">
              <button v-for="b in g" :key="b.label" :class="{ drop: b.drop }" :style="{ width: b.w + 'px' }">{{ b.label }}</button>
            </div>
          </div>
          <div class="tree-box"></div>
          <div class="df">
            <label><input type="checkbox" disabled />Group material</label>
            <i></i>
            <label class="sel def"><select aria-label="Material" disabled><option>Default</option></select><Ic name="chev" /></label>
            <label><input type="checkbox" disabled />Fill</label>
          </div>
        </div>
      </main>
    </div>
  </div>
</template>

<style>
html, body { margin: 0; height: 100%; overflow: hidden; }
#app { height: 100%; }
</style>

<style scoped>
.app { display: flex; flex-direction: column; height: 100vh; background: #fff; color: #111; font: 12px/16px "Open Sans", "Noto Sans", sans-serif; }
.app *, .app *::before { box-sizing: border-box; }
button, select, input { font: inherit; color: inherit; margin: 0; }
button { display: flex; align-items: center; justify-content: center; padding: 0; border: 0; background: none; white-space: nowrap; }
svg { display: block; flex: none; }
h1, h2, h3, h4 { margin: 0; font: inherit; }

.titlebar { display: flex; align-items: center; flex: none; height: 31px; padding: 0 0 2px 9px; background: #4679a2; color: #b9cfe0; }
.titlebar h1 { margin-left: 8px; font-size: 12px; white-space: nowrap; }
.win { display: flex; margin-left: auto; color: #8db3cf; }
.win button { width: 47px; }

.menubar { display: flex; align-items: center; flex: none; height: 30px; padding-left: 2px; border-bottom: 1px solid #aaa; background: #fff; }
.menu { padding: 0 5px; }
.sep { flex: none; width: 1px; height: 18px; margin: 0 6px; background: #aaa; }
.sep.first { margin-left: 7px; }
.mi { width: 26px; height: 24px; color: #222; }
.mi.wide { width: 40px; gap: 4px; }
.right { display: flex; align-items: center; margin-left: auto; }
.mb { width: 24px; height: 24px; margin: 0 2px; border-radius: 2px; color: #222; }
.mb.dd { width: 36px; gap: 2px; }
.mb.on { background: #cbdcea; }
.grey { color: #777; }
.total { width: 118px; height: 24px; margin: 0 2px 0 9px; padding: 0 6px; background: #f2f1f4; line-height: 24px; text-align: right; }

.work { display: flex; flex: 1; min-height: 0; }
.left { display: flex; flex-direction: column; flex: none; width: 367px; border-right: 1px solid #aaa; background: #f8f8f8; }
.tabbar { display: flex; align-items: center; flex: none; height: 29px; padding-left: 5px; border-bottom: 1px solid #aaa; }
.sel { position: relative; display: block; }
.sel select { width: 100%; height: 100%; padding: 0 4px; border: 1px solid #aaa; background: #fff; appearance: none; opacity: 1; }
.sel svg { position: absolute; right: 4px; top: 50%; margin-top: -5px; color: #333; pointer-events: none; }
.tabs-sel { width: 190px; height: 23px; margin-right: 5px; }
.tabs-sel select { border-radius: 3px; }
.letter { width: 28px; color: #333; }
.gear { width: 28px; }
.collapse { margin-left: 16px; width: 24px; }
.cols { display: flex; flex: 1; min-height: 0; }
.panel { width: 313px; }
.head { height: 86px; padding: 15px 15px 0 16px; border-bottom: 1px solid #aaa; background: #fff; }
.title { display: flex; align-items: center; height: 26px; gap: 8px; }
.title h2 { flex: 1; font-size: 13px; }
.title button { width: 20px; color: #555; }
.tabs { display: flex; gap: 8px; margin-top: 17px; }
.tabs a { padding: 1px 1px 0; height: 20px; color: inherit; text-decoration: none; line-height: 16px; }
.tabs a.cur { border-bottom: 3px solid #3b6f99; }

section { margin: 0 15px 0 14px; padding: 0 2px 16px; }
section + section { border-top: 1px solid #aaa; }
.sh { display: flex; align-items: center; height: 32px; padding: 0 2px; color: #555; }
section + section .sh { height: 31px; padding-bottom: 2px; }
.sh h3 { flex: 1; margin-left: 6px; color: #111; font-size: 13px; font-weight: 600; }
.sh button { margin-left: 12px; }
.g2 { display: grid; grid-template-columns: 1fr 1fr; gap: 8px; }
.g4 { display: grid; grid-template-columns: repeat(4, 1fr); gap: 8px; }
.btn, .tile { border: 1px solid #e3e3e6; border-radius: 3px; background: #fff; }
.btn { height: 28px; gap: 5px; }
.full { width: 100%; }
.tile { flex-direction: column; justify-content: flex-start; height: 64px; padding-top: 7px; }
.tile span { display: flex; align-items: center; height: 30px; width: 54px; justify-content: center; white-space: normal; line-height: 13px; text-align: center; }
.tile:disabled svg { opacity: .4; }
.btn:disabled, .tile:disabled { color: #888; }
h4 { padding: 12px 0 4px; }
h4.tight { padding: 4px 0; }
h4.far { padding-top: 16px; }
.radios { display: flex; gap: 11px; height: 31px; padding: 2px 0 0 2px; }
.radios label { display: flex; height: 16px; align-items: center; gap: 7px; }
.radios input { width: 13px; height: 13px; border: 2px solid #555; border-radius: 50%; background: #fff; appearance: none; }
.radios input:checked { border-color: #3b6f99; background: radial-gradient(#3b6f99 3px, #fff 4px); }

.strip { display: flex; flex-direction: column; align-items: center; flex: 1; padding: 6px 1px 0 0; border-left: 1px solid #aaa; overflow: hidden; }
.blk { flex: none; width: 46px; height: 35px; margin-bottom: 10px; background: #000; }
.blk:nth-child(4) { margin-bottom: 3px; }
.blk svg { width: 46px; height: 35px; }
.w { fill: none; stroke: #fff; stroke-width: 4; }
.st { position: relative; flex: none; width: 100%; height: 34px; }
.st.on { background: #cbdcea; }
.st.line { border-bottom: 1px solid #ddd; }
.st.low { height: 31px; }
.dot { position: absolute; right: 2px; top: 50%; width: 3px; height: 3px; border-radius: 50%; background: #888; }
.core { height: 27px; gap: 0; font-size: 12px; font-weight: 700; }
.clarus { align-items: center; height: 29px; font-family: Lato, sans-serif; font-size: 15px; color: #333; }
.clarus svg { margin-bottom: 10px; }
.st.esse { height: 46px; }
.pic { position: relative; flex: none; width: 46px; }
.pic svg { width: 46px; }
.desk { margin-top: 8px; height: 32px; }
.room { margin-top: 14px; height: 27px; }
.hall { margin-top: 14px; height: 35px; }

.stage { position: relative; display: flex; flex-direction: column; flex: 1; min-width: 0; padding-bottom: 2px; }
.view { position: relative; flex: 461 1 0; min-height: 0; overflow: hidden; border-bottom: 1px solid #aaa; }
.plan { flex-grow: 507; }
.render { border-top: 1px solid #fff; }
.scene { position: absolute; inset: 0; width: 100%; height: 100%; }
.tools { position: absolute; left: 4px; top: 4px; display: flex; align-items: center; height: 31px; padding: 0 1px; border: 1px solid #aaa; border-radius: 3px; background: #f8f8f8; }
.tools button { width: 29px; height: 28px; color: #222; }
.tools button.dd { width: 41px; gap: 2px; }
.tools i { width: 1px; height: 20px; margin: 0 3px 0 2px; background: #aaa; }
.none { position: absolute; right: 5px; top: 4px; width: 76px; height: 31px; border: 1px solid #999; border-radius: 3px; background: #f2f2f2; }

.modes { display: flex; flex: none; height: 25px; }
.modes button { padding: 0 12px; }
.modes button.on { border-top: 3px solid #3b6f99; background: #cbdcea; }
.modes .first { padding: 0 11px; }
.modes .kebab { flex-direction: column; gap: 3px; }
.kebab i { width: 3px; height: 3px; border-radius: 50%; background: #222; }
.dims { display: flex; margin-left: auto; }
.dims button { width: 38px; padding: 0; }
.dims button:last-child { width: 50px; }
.dims::before { content: ""; width: 1px; height: 19px; margin: 3px 0; background: #aaa; }
.floors { display: grid; grid-template-columns: repeat(3, 1fr); flex: none; height: 23px; border-top: 1px solid #555; }
.floors button { border-left: 1px solid #555; background: #bfbde0; }
.floors .cur { border: 3px solid #000; }

.dialog { position: absolute; right: 42px; top: 182px; display: flex; flex-direction: column; width: 586px; height: 394px; padding: 0 2px 0 1px; border: 1px solid #aaa; border-radius: 8px; background: #f6f6f6; box-shadow: 0 14px 30px rgba(0, 0, 0, .25), 0 0 12px rgba(0, 0, 0, .12); }
.dt { display: flex; align-items: center; height: 32px; padding: 0 5px 0 7px; color: #888; }
.dt h2 { flex: 1; margin-left: 5px; }
.dbar { display: flex; height: 23px; padding-left: 1px; }
.tree { width: 55px; }
.dg { display: flex; gap: 1px; padding-left: 2px; border-left: 1px solid #bbb; }
.dg button { position: relative; border: 1px solid #c4c4c4; background: #fcfcfc; }
.drop::after { content: ""; position: absolute; right: 2px; bottom: 2px; width: 2px; height: 2px; background: #111; }
.tree-box { flex: 1; margin-top: 1px; border: 1px solid #000; background: #fff; }
.df { display: flex; align-items: center; height: 24px; padding-left: 1px; color: #888; }
.df label:not(.sel) { display: flex; align-items: center; gap: 6px; }
.df input { width: 13px; height: 13px; border: 1px solid #ccc; border-radius: 3px; background: #f6f6f6; appearance: none; }
.df i { width: 1px; height: 16px; margin: 0 1px 0 0; background: #aaa; }
.def { width: 70px; height: 16px; margin-right: 1px; }
.def select { line-height: 14px; }
</style>
